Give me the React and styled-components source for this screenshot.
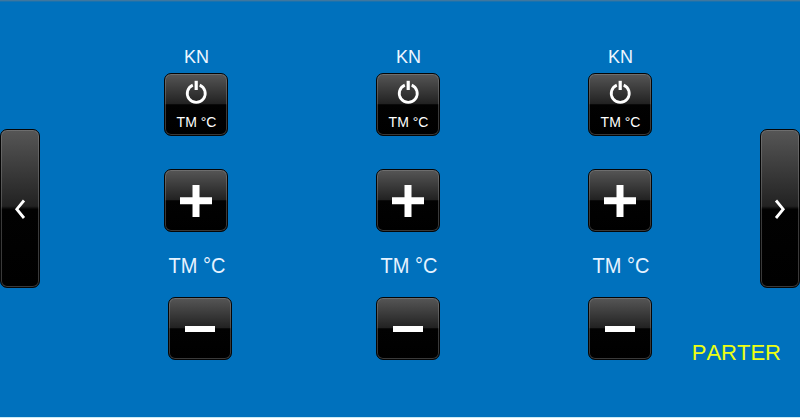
import React from "react";
import styled, { createGlobalStyle, css } from "styled-components";

const GlobalStyle = createGlobalStyle`
  * { box-sizing: border-box; }
  body { margin: 0; font-family: "Liberation Sans", Arial, sans-serif; }
`;

const Screen = styled.main`
  width: 800px;
  height: 418px;
  overflow: hidden;
  display: grid;
  grid-template-columns: 40px 1fr 40px;
  background: #0071bd;
  border-top: 1px solid #3f779f;
  border-bottom: 1px solid #c9e9f5;
  box-shadow: inset 0 1px 0 #1a72ae;
`;

const glossy = css`
  display: flex;
  align-items: center;
  padding: 0;
  color: #fff;
  font-family: inherit;
  border: 1px solid #050505;
  border-radius: 7px;
  background: linear-gradient(#565656 0%, #222 48.5%, #020202 50.5%, #000 100%);
  box-shadow: inset 0 0 0 1px rgba(150, 150, 150, 0.38);
`;

const PageButton = styled.button`
  ${glossy}
  justify-content: center;
  width: 40px;
  height: 159px;
  margin-top: 128px;
`;

const Zones = styled.div`
  display: flex;
  gap: 148px;
  padding-left: 124px;
  position: relative;
`;

const Zone = styled.section`
  width: 64px;
  display: flex;
  flex-direction: column;
  align-items: center;
`;

const KeyButton = styled.button`
  ${glossy}
  flex: none;
  flex-direction: column;
  justify-content: ${(p) => (p.$stacked ? "flex-start" : "center")};
  width: 64px;
  height: 63px;
  margin-top: ${(p) => p.$top}px;
  margin-left: ${(p) => (p.$shift || 0) * 2}px;
`;

const ZoneName = styled.h2`
  margin: 46px 0 0;
  padding-left: 1px;
  height: 21px;
  font-size: 18px;
  font-weight: 400;
  line-height: 20px;
  color: #edf6ff;
`;

const PowerLabel = styled.span`
  margin-top: 9px;
  padding-left: 1px;
  font-size: 14px;
  line-height: 16px;
  white-space: nowrap;
`;

const Reading = styled.div`
  margin-top: 22px;
  padding-left: 2px;
  height: 24px;
  font-size: 20px;
  line-height: 24px;
  transform: scaleY(1.06);
  white-space: nowrap;
  color: #e6f3ff;
`;

const FloorName = styled.div`
  position: absolute;
  right: -21px;
  bottom: 51px;
  font-size: 22px;
  font-kerning: none;
  line-height: 26px;
  color: #ecff12;
`;

const Icon = styled.svg`
  display: block;
  flex: none;
  margin-top: ${(p) => p.$top || 0}px;
`;

const PowerIcon = () => (
  <Icon $top={6} width="24" height="25" viewBox="0 0 24 25" fill="none" stroke="#fff" aria-hidden="true">
    <path d="M8.8 5.1A9 9 0 1 0 15.7 5.1" strokeWidth="2.8" />
    <path d="M12.2 0.8V10" strokeWidth="3.2" />
  </Icon>
);

const PlusIcon = () => (
  <Icon width="32" height="32" viewBox="0 0 32 32" fill="#fff" aria-hidden="true">
    <path d="M12.5 0h7v12.3h12.5v7H19.5V32h-7V19.3H0v-7h12.5z" />
  </Icon>
);

const MinusIcon = () => (
  <Icon width="30" height="6" viewBox="0 0 30 6" fill="#fff" aria-hidden="true">
    <path d="M0 0h30v6H0z" />
  </Icon>
);

const Chevron = ({ d }) => (
  <Icon width="16" height="20" viewBox="0 0 16 20" fill="none" stroke="#fff" strokeWidth="2.8" aria-hidden="true">
    <path d={d} />
  </Icon>
);

const zones = [
  { id: 1, name: "KN", shift: 4 },
  { id: 2, name: "KN", shift: 0 },
  { id: 3, name: "KN", shift: 0 },
];

export default function App() {
  return (
    <>
      <GlobalStyle />
      <Screen>
        <PageButton aria-label="Previous">
          <Chevron d="M12 1.5L4.800 10.200L12 19" />
        </PageButton>
        <Zones>
          {zones.map((zone) => (
            <Zone key={zone.id}>
              <ZoneName>{zone.name}</ZoneName>
              <KeyButton $top={5} $stacked>
                <PowerIcon />
                <PowerLabel>TM °C</PowerLabel>
              </KeyButton>
              <KeyButton $top={33} aria-label="Increase">
                <PlusIcon />
              </KeyButton>
              <Reading>TM °C</Reading>
              <KeyButton $top={19} $shift={zone.shift} aria-label="Decrease">
                <MinusIcon />
              </KeyButton>
            </Zone>
          ))}
          <FloorName>PARTER</FloorName>
        </Zones>
        <PageButton aria-label="Next">
          <Chevron d="M4 1.5L11.200 10.200L4 19" />
        </PageButton>
      </Screen>
    </>
  );
}
